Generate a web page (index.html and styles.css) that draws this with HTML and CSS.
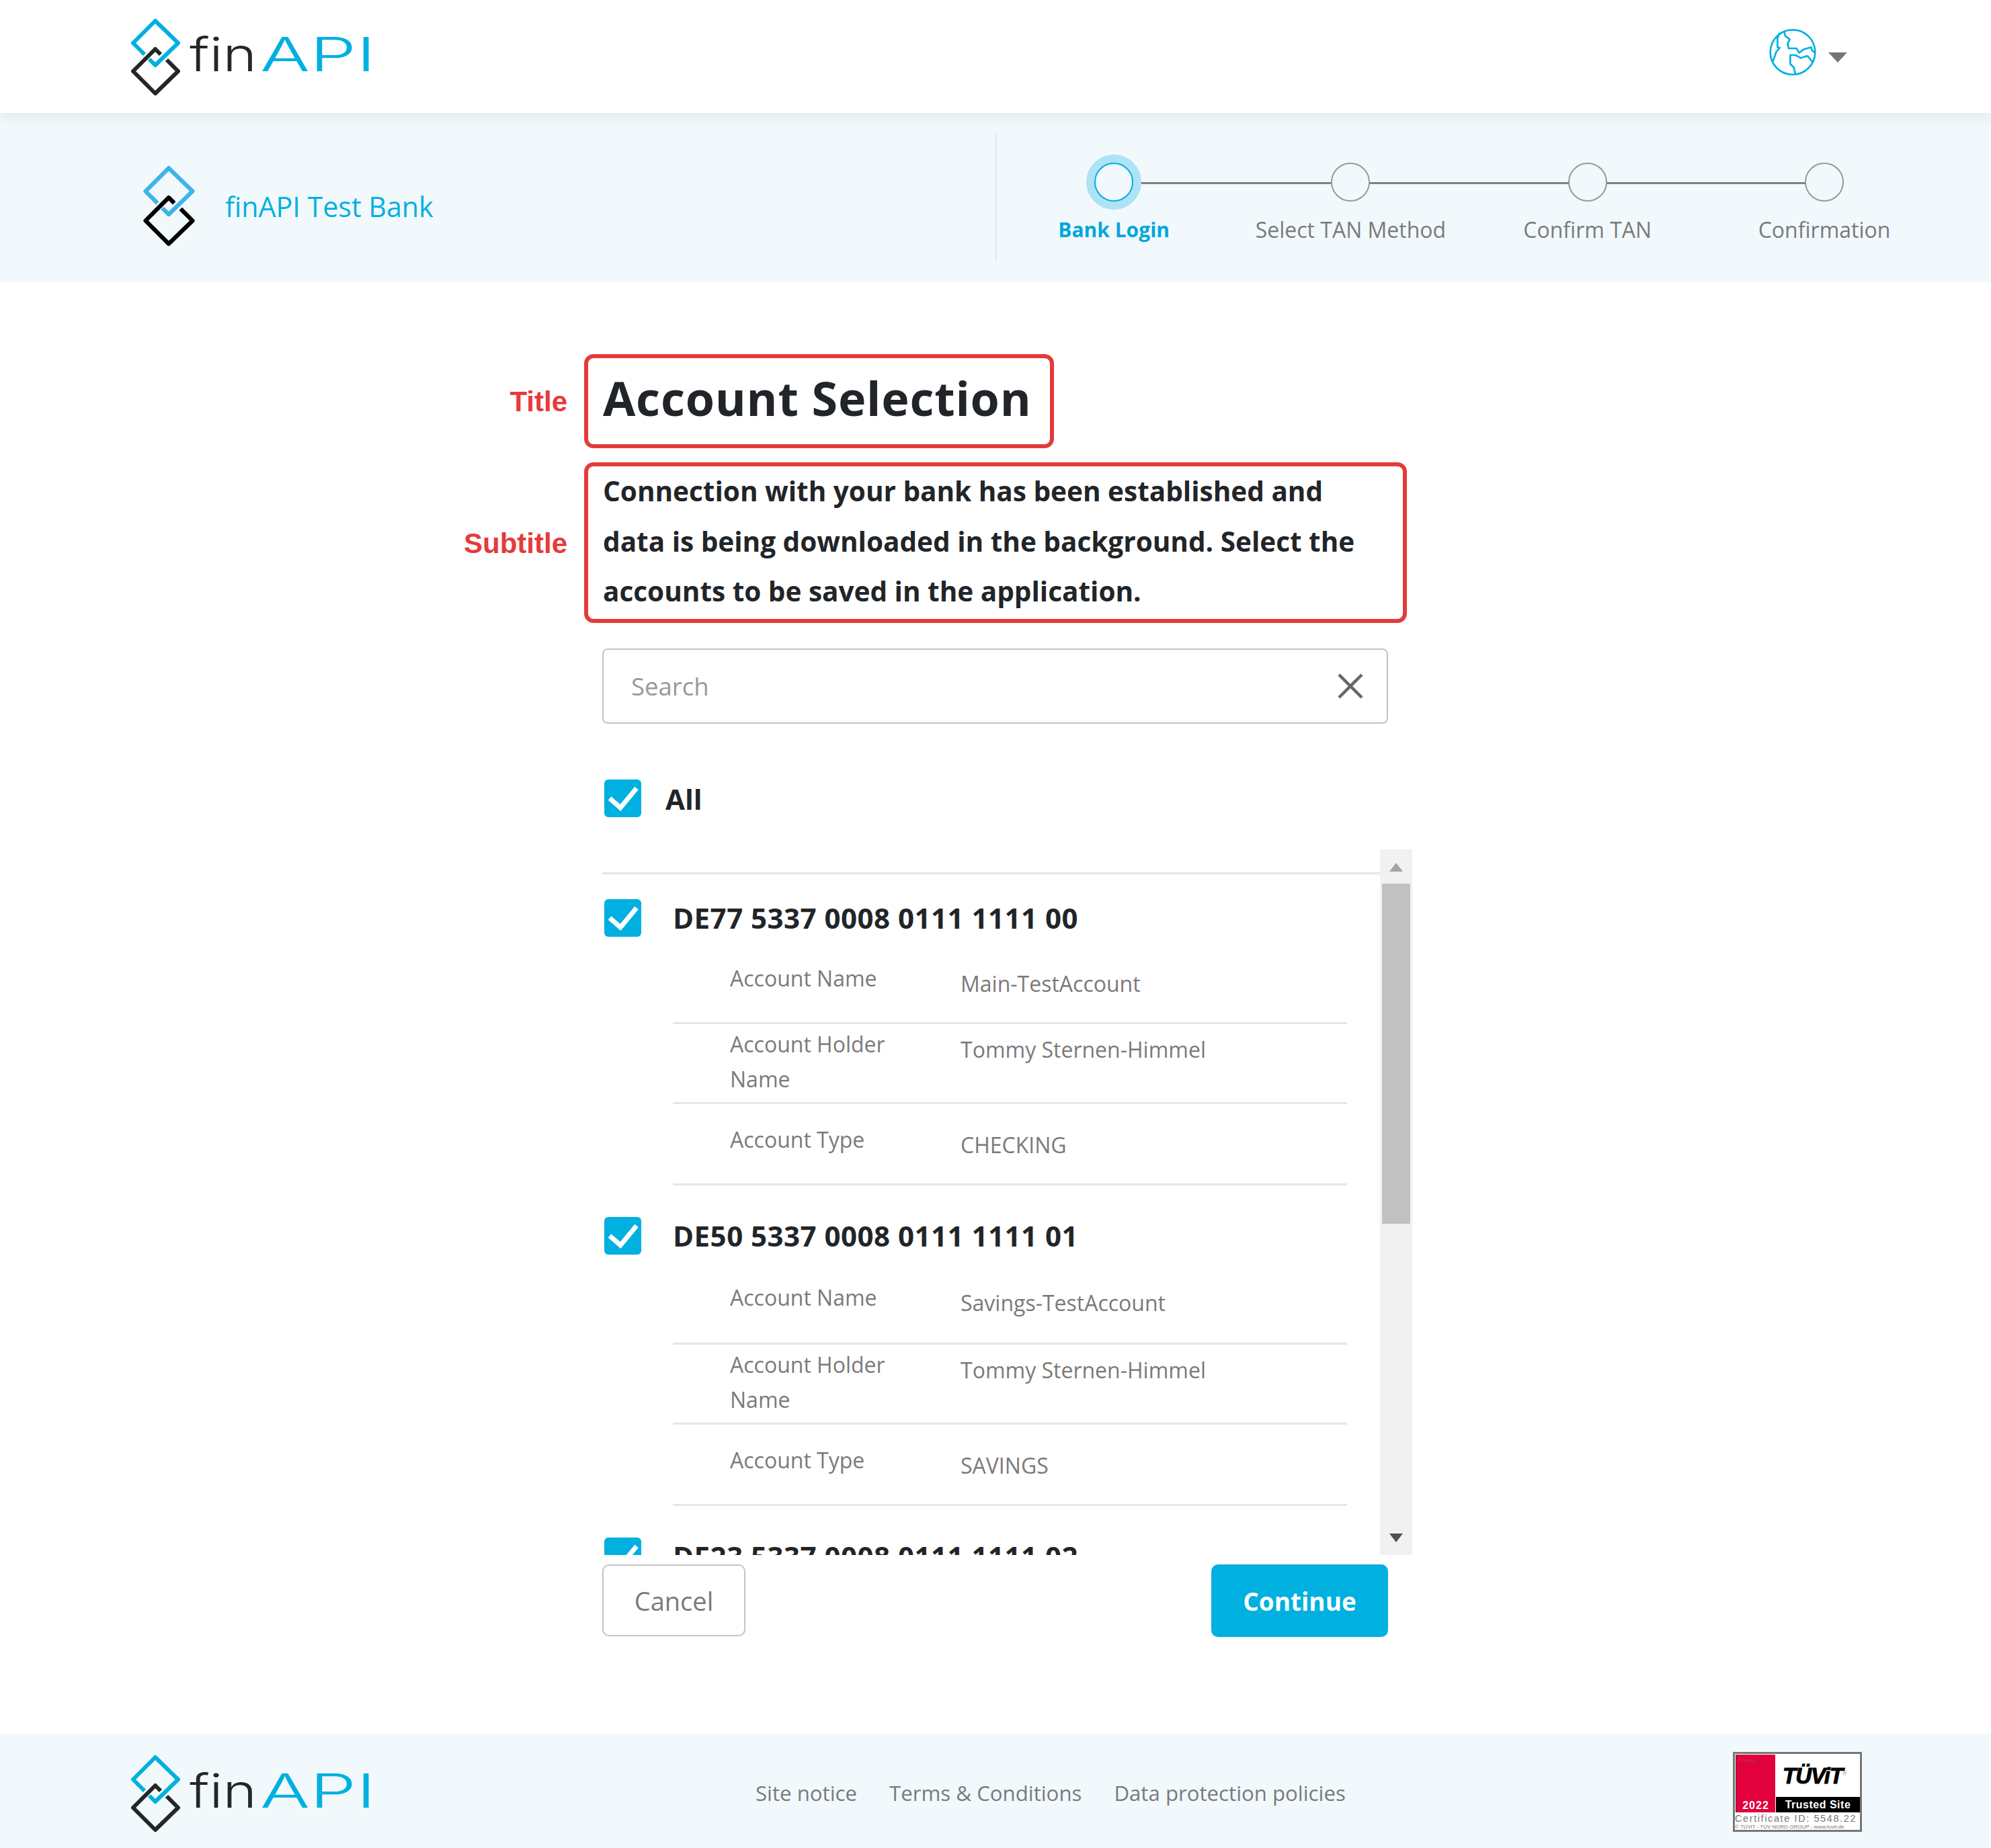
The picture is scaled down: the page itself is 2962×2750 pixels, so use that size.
FILE: index.html
```html
<!DOCTYPE html>
<html>

<head>
    <title>finAPI - Account Selection</title>
    <link rel="stylesheet" href="styles.css">
</head>

<body>
    <svg class="defs" width="0" height="0">
        <symbol id="mark" viewBox="0 0 74 116">
            <path class="mark-top" d="M20 54 L3 37 L36 4 L70 37 L36 70 L27 61" />
            <path class="mark-bottom" d="M44 54 L36 46 L3 79 L36 112 L70 79 L53 62" />
        </symbol>
    </svg>

    <header class="topbar">
        <svg class="logo" viewBox="0 0 360 116">
            <use href="#mark" width="74" height="116" />
            <text class="logo-fin" x="87" y="79" textLength="100" lengthAdjust="spacingAndGlyphs">fin</text>
            <text class="logo-api" x="192" y="79" textLength="172" lengthAdjust="spacingAndGlyphs">API</text>
        </svg>
        <div class="lang">
            <svg class="globe" viewBox="95 65 216 216">
                <circle cx="203" cy="172" r="100" />
                <path d="M145 85 L135 110 L135 150 L145 152 L130 170 L115 212" />
                <path d="M165 80 L170 100 L190 115 L180 135 L185 155 L220 155 L232 175 L250 160 L285 150 L290 165 L303 175" />
                <path d="M295 220 L270 190 L262 190 L240 198 L215 185 L192 185 L192 225 L208 240 L215 270" />
            </svg>
            <span class="caret"></span>
        </div>
    </header>

    <section class="subbar">
        <div class="bank">
            <svg class="bank-mark"><use href="#mark" /></svg>
            <span class="bank-name">finAPI Test Bank</span>
        </div>
        <ol class="steps">
            <li class="step active"><span class="dot"></span><span class="step-name">Bank Login</span></li>
            <li class="step"><span class="dot"></span><span class="step-name">Select TAN Method</span></li>
            <li class="step"><span class="dot"></span><span class="step-name">Confirm TAN</span></li>
            <li class="step last"><span class="dot"></span><span class="step-name">Confirmation</span></li>
        </ol>
    </section>

    <main class="content">
        <div class="annotated title-row">
            <span class="note">Title</span>
            <h1 class="marked title">Account Selection</h1>
        </div>
        <div class="annotated subtitle-row">
            <span class="note">Subtitle</span>
            <p class="marked subtitle">Connection with your bank has been established and data is being downloaded in the background. Select the accounts to be saved in the application.</p>
        </div>

        <div class="column">
            <div class="search">
                <input type="text" placeholder="Search">
                <svg class="clear" viewBox="0 0 38 38">
                    <path d="M2 2 L36 36 M36 2 L2 36" />
                </svg>
            </div>

            <label class="all">
                <svg class="check" viewBox="0 0 55 56"><path d="M8 28 L24 42 L48 13" /></svg>
                <span>All</span>
            </label>

            <div class="list-wrap">
                <div class="list">
                    <div class="item">
                        <div class="item-head">
                            <svg class="check" viewBox="0 0 55 56"><path d="M8 28 L24 42 L48 13" /></svg>
                            <span class="iban">DE77 5337 0008 0111 1111 00</span>
                        </div>
                        <div class="row first"><span>Account Name</span><span class="value">Main-TestAccount</span></div>
                        <div class="row tall"><span>Account Holder Name</span><span class="value">Tommy Sternen-Himmel</span></div>
                        <div class="row"><span>Account Type</span><span class="value">CHECKING</span></div>
                    </div>
                    <div class="item">
                        <div class="item-head">
                            <svg class="check" viewBox="0 0 55 56"><path d="M8 28 L24 42 L48 13" /></svg>
                            <span class="iban">DE50 5337 0008 0111 1111 01</span>
                        </div>
                        <div class="row first"><span>Account Name</span><span class="value">Savings-TestAccount</span></div>
                        <div class="row tall"><span>Account Holder Name</span><span class="value">Tommy Sternen-Himmel</span></div>
                        <div class="row"><span>Account Type</span><span class="value">SAVINGS</span></div>
                    </div>
                    <div class="item">
                        <div class="item-head">
                            <svg class="check" viewBox="0 0 55 56"><path d="M8 28 L24 42 L48 13" /></svg>
                            <span class="iban">DE23 5337 0008 0111 1111 02</span>
                        </div>
                    </div>
                </div>
                <div class="scrollbar">
                    <span class="arrow-up"></span>
                    <span class="thumb"></span>
                    <span class="arrow-down"></span>
                </div>
            </div>

            <div class="actions">
                <button class="btn-cancel">Cancel</button>
                <button class="btn-continue">Continue</button>
            </div>
        </div>
    </main>

    <footer class="footer">
        <svg class="logo" viewBox="0 0 360 116">
            <use href="#mark" width="74" height="116" />
            <text class="logo-fin" x="87" y="79" textLength="100" lengthAdjust="spacingAndGlyphs">fin</text>
            <text class="logo-api" x="192" y="79" textLength="172" lengthAdjust="spacingAndGlyphs">API</text>
        </svg>
        <nav class="footer-links">
            <a href="#">Site notice</a>
            <a href="#">Terms &amp; Conditions</a>
            <a href="#">Data protection policies</a>
        </nav>
        <div class="badge">
            <div class="badge-top">
                <div class="badge-red">
                    <span class="badge-privacy">Privacy</span>
                    <span class="badge-year">2022</span>
                </div>
                <div class="badge-right">
                    <div class="badge-brand">TÜViT<sup>®</sup></div>
                    <div class="badge-trusted">Trusted Site</div>
                </div>
            </div>
            <div class="badge-cert">Certificate ID: 5548.22</div>
            <div class="badge-small">© TÜViT - TÜV NORD GROUP - www.tuvit.de</div>
        </div>
    </footer>
</body>

</html>
```

FILE: styles.css
```css
* {
    box-sizing: border-box;
}

body {
    margin: 0;
    width: 2962px;
    height: 2750px;
    overflow: hidden;
    background-color: white;
    color: #212529;
    font-family: "Open Sans", sans-serif;
}

.defs {
    position: absolute;
}

/* logo */
.mark-top,
.mark-bottom {
    fill: none;
    stroke-width: 6;
    stroke-linejoin: round;
}

.mark-top {
    stroke: var(--mark-blue, #00b0e0);
}

.mark-bottom {
    stroke: var(--mark-dark, #262626);
}

.logo {
    width: 360px;
    height: 116px;
    flex: none;
    overflow: visible;
}

.logo-fin,
.logo-api {
    font-family: Inter, sans-serif;
    font-weight: 300;
    font-size: 70px;
}

.logo-fin {
    fill: #262626;
}

.logo-api {
    fill: #00b0e0;
}

/* top bar */
.topbar {
    position: relative;
    z-index: 2;
    height: 168px;
    padding: 27px 214px 0 195px;
    display: flex;
    justify-content: space-between;
    align-items: flex-start;
    background-color: white;
    box-shadow: 0 3px 22px rgba(0, 0, 0, 0.09);
}

.lang {
    display: flex;
    align-items: center;
    gap: 17px;
    margin-top: 15px;
}

.globe {
    width: 72px;
    height: 72px;
    fill: none;
    stroke: #00b0e0;
    stroke-width: 8;
    stroke-linejoin: round;
}

.caret {
    margin-top: 14px;
    border-left: 14px solid transparent;
    border-right: 14px solid transparent;
    border-top: 15px solid #757575;
}

/* bank and steps */
.subbar {
    height: 252px;
    display: flex;
    background-color: #f2f9fd;
}

.bank {
    width: 1483px;
    height: 191px;
    margin-top: 29px;
    padding: 49px 0 0 212px;
    display: flex;
    align-items: flex-start;
    gap: 43px;
    border-right: 2px solid #e1e7ea;
    --mark-blue: #3fb4e8;
    --mark-dark: #000;
}

.bank-mark {
    width: 80px;
    height: 121px;
}

.bank-name {
    margin-top: 33px;
    font-size: 41.2px;
    line-height: 56px;
    color: #00b0e0;
}

.steps {
    list-style: none;
    margin: 0 0 0 -2px;
    padding: 74px 0 0;
    display: grid;
    grid-template-columns: repeat(4, 352.3px);
    align-items: start;
}

.step {
    position: relative;
    display: flex;
    flex-direction: column;
    align-items: center;
    white-space: nowrap;
    font-size: 32px;
    line-height: 40px;
    color: #7a7a7a;
}

.step::after {
    content: "";
    position: absolute;
    top: 29px;
    left: 50%;
    width: 100%;
    height: 3px;
    background-color: #808080;
}

.step.last::after {
    display: none;
}

.dot {
    position: relative;
    z-index: 1;
    width: 58px;
    height: 58px;
    border: 2px solid #999;
    border-radius: 50%;
    background-color: #f2f9fd;
}

.step-name {
    margin-top: 22px;
}

.step.active {
    color: #00a7dc;
    font-size: 30px;
    font-weight: 700;
}

.step.active .dot {
    border-color: #00b0e0;
    box-shadow: 0 0 0 12px #ade3f5;
}

/* main column */
.content {
    height: 2160px;
    padding-top: 107px;
}

.annotated {
    display: grid;
    grid-template-columns: 844px auto;
    column-gap: 25px;
    align-items: center;
    justify-content: start;
}

.subtitle-row {
    margin-top: 21px;
}

.note {
    padding-top: 2px;
    text-align: right;
    font-family: "Liberation Sans", Arial, sans-serif;
    font-weight: bold;
    font-size: 42px;
    color: #e53a3a;
}

.marked {
    margin: 0;
    border: 6px solid #e53a3a;
    border-radius: 14px;
    padding-left: 22px;
}

.title {
    width: 699px;
    height: 140px;
    font-size: 70px;
    font-weight: 700;
    line-height: 118px;
    letter-spacing: 0.8px;
}

.subtitle {
    width: 1224px;
    height: 239px;
    padding-right: 40px;
    font-size: 40.5px;
    font-weight: 700;
    line-height: 74.6px;
}

.column {
    width: 1205px;
    margin: 38px 0 0 896px;
}

.search {
    width: 1169px;
    height: 112px;
    padding: 0 35px 0 41px;
    display: flex;
    align-items: center;
    border: 2px solid #c4c4c4;
    border-radius: 8px;
}

.search input {
    flex: 1;
    border: 0;
    outline: 0;
    padding: 0;
    font-family: "Open Sans", sans-serif;
    font-size: 36.5px;
}

.search input::placeholder {
    color: #999;
}

.clear {
    width: 38px;
    height: 38px;
    fill: none;
    stroke: #666;
    stroke-width: 4.5;
}

.check {
    width: 55px;
    height: 56px;
    flex: none;
    border-radius: 6px;
    background-color: #00b0e0;
    fill: none;
    stroke: white;
    stroke-width: 7;
}

.all {
    height: 56px;
    margin: 83px 0 48px 3px;
    display: flex;
    align-items: center;
    gap: 36px;
    font-size: 42px;
    font-weight: 700;
}

/* account list and its scrollbar */
.list-wrap {
    height: 1050px;
    display: flex;
}

.list {
    width: 1157px;
    height: 1050px;
    overflow: hidden;
    padding-top: 34px;
}

.item {
    padding-top: 37px;
    margin-bottom: 10px;
}

.item:first-child {
    border-top: 3px solid #e6e6ea;
}

.item-head {
    height: 55px;
    margin-left: 3px;
    display: flex;
    align-items: center;
    gap: 47px;
}

.iban {
    font-size: 42px;
    font-weight: 700;
    letter-spacing: 0.5px;
    white-space: nowrap;
}

.row {
    width: 1003px;
    margin-left: 105px;
    padding: 27px 0 39px 85px;
    display: grid;
    grid-template-columns: 343px 1fr;
    font-size: 32px;
    line-height: 52px;
    color: #7a7a7a;
    border-bottom: 3px solid #e6e6ea;
}

.row.first {
    padding-top: 37px;
    padding-bottom: 39px;
}

.item + .item .row.first {
    padding-top: 39px;
    padding-bottom: 41px;
}

.row.tall {
    padding-top: 4px;
    padding-bottom: 8px;
}

.row span:first-child {
    padding-right: 60px;
}

.value {
    padding-top: 8px;
    margin-bottom: -8px;
}

.scrollbar {
    width: 48px;
    height: 1050px;
    padding: 20px 3px 0;
    display: flex;
    flex-direction: column;
    align-items: center;
    background-color: #f1f1f1;
}

.arrow-up {
    border-left: 10px solid transparent;
    border-right: 10px solid transparent;
    border-bottom: 13px solid #a3a3a3;
}

.thumb {
    width: 42px;
    height: 506px;
    margin-top: 18px;
    background-color: #c1c1c1;
}

.arrow-down {
    margin-top: 461px;
    border-left: 10px solid transparent;
    border-right: 10px solid transparent;
    border-top: 13px solid #505050;
}

.actions {
    width: 1169px;
    margin-top: 14px;
    display: flex;
    justify-content: space-between;
}

.btn-cancel,
.btn-continue {
    height: 108px;
    border-radius: 10px;
    font-family: "Open Sans", sans-serif;
    font-size: 38px;
}

.btn-cancel {
    width: 213px;
    height: 107px;
    background-color: white;
    border: 2px solid #c4c4c4;
    color: #7a7a7a;
}

.btn-continue {
    width: 263px;
    border: 0;
    background-color: #00b0e0;
    color: white;
    font-weight: 700;
    font-size: 37px;
}

/* footer */
.footer {
    height: 170px;
    padding: 31px 192px 0 195px;
    display: flex;
    align-items: flex-start;
    background-color: #f2f9fd;
}

.footer-links {
    margin: 36px 0 0 569px;
    display: flex;
    gap: 48px;
    font-size: 31.2px;
    line-height: 42px;
}

.footer-links a {
    color: #7a7a7a;
    text-decoration: none;
}

.badge {
    width: 192px;
    height: 119px;
    margin: -4px 0 0 auto;
    border: 3px solid #777;
    background-color: white;
    color: #777;
    font-family: "Liberation Sans", Arial, sans-serif;
    overflow: hidden;
}

.badge-top {
    height: 87px;
    display: flex;
}

.badge-red {
    width: 59px;
    margin: 1px 0 0 1px;
    padding: 4px 3px 1px;
    display: flex;
    flex-direction: column;
    justify-content: space-between;
    background-color: #e2003d;
    color: white;
    border-left: 1px solid #333;
}

.badge-privacy {
    font-size: 8px;
    color: #a8425e;
}

.badge-year {
    text-align: center;
    font-size: 16px;
    font-weight: bold;
    letter-spacing: 1px;
}

.badge-right {
    flex: 1;
    display: flex;
    flex-direction: column;
    margin-left: 1px;
}

.badge-brand {
    height: 64px;
    padding: 15px 0 0 10px;
    font-size: 33px;
    line-height: 36px;
    font-weight: bold;
    font-style: italic;
    letter-spacing: -1px;
    color: #000;
    -webkit-text-stroke: 1px #000;
}

.badge-brand sup {
    font-size: 9px;
    font-style: normal;
    font-weight: normal;
    line-height: 0;
    color: #999;
    -webkit-text-stroke: 0;
}

.badge-trusted {
    height: 23px;
    background-color: #000;
    color: white;
    text-align: center;
    font-size: 16px;
    line-height: 23px;
    font-weight: bold;
    letter-spacing: 0.5px;
}

.badge-cert {
    font-size: 14.5px;
    line-height: 18px;
    white-space: nowrap;
    letter-spacing: 1.6px;
}

.badge-small {
    font-size: 8px;
    line-height: 8px;
    white-space: nowrap;
}
```
